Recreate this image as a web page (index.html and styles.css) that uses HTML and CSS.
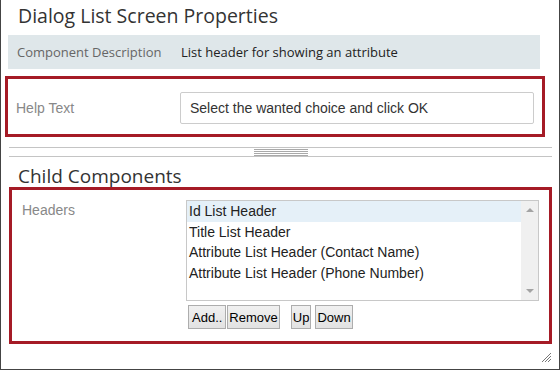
FILE: index.html
```html
<!DOCTYPE html>
<html>
<head>
    <title>Dialog List Screen Properties</title>
    <link rel="stylesheet" href="styles.css">
</head>
<body>
    <div class="dialog">
        <h1 class="title">Dialog List Screen Properties</h1>

        <div class="desc">
            <span class="desc-label">Component Description</span>
            <span class="desc-value">List header for showing an attribute</span>
        </div>

        <div class="box help-box">
            <span class="field-label">Help Text</span>
            <div class="text-input">Select the wanted choice and click OK</div>
        </div>

        <div class="splitter"><div class="grip"></div></div>

        <h2 class="title sub">Child Components</h2>

        <div class="box child-box">
            <span class="field-label">Headers</span>
            <div class="list-col">
                <div class="listbox">
                    <ul class="items">
                        <li class="selected">Id List Header</li>
                        <li>Title List Header</li>
                        <li>Attribute List Header (Contact Name)</li>
                        <li>Attribute List Header (Phone Number)</li>
                    </ul>
                    <div class="scrollbar">
                        <span class="arrow up"></span>
                        <span class="arrow down"></span>
                    </div>
                </div>
                <div class="buttons">
                    <button class="add">Add..</button>
                    <button class="remove">Remove</button>
                    <button class="up">Up</button>
                    <button class="down">Down</button>
                </div>
            </div>
        </div>

        <div class="footer">
            <svg class="resize" width="11" height="11" viewBox="0 0 11 11">
                <path d="M10 1 L1 10 M10 4 L4 10 M10 7 L7 10" stroke="#777" stroke-width="1"/>
            </svg>
        </div>
    </div>
</body>
</html>
```

FILE: styles.css
```css
body { margin: 0; background: #fff; font-family: "Liberation Sans", Arial, sans-serif; }
.dialog { box-sizing: border-box; width: 560px; height: 370px; border: 1px solid #444; border-top: none; display: flex; flex-direction: column; }

.title { margin: 0; padding-left: 17px; font-family: "Open Sans", sans-serif; font-weight: 400; font-size: 19.5px; color: #333; height: 35px; line-height: 31px; }
.sub { height: 30px; line-height: 38px; font-size: 19px; }

.desc { display: flex; align-items: center; margin: 0 19px 0 7px; height: 34px; background: #dfe7ea; padding-left: 9px; font-family: "Open Sans", sans-serif; font-size: 13px; }
.desc-label { width: 164px; color: #666; }
.desc-value { color: #222; }

.box { border: 3px solid #a51b26; display: flex; }
.field-label { color: #888; font-size: 14px; }

.help-box { margin: 7px 14px 0 4px; height: 55px; align-items: center; padding: 0 8px; }
.help-box .field-label { width: 164px; padding-top: 3px; }
.text-input { flex: 1; box-sizing: border-box; height: 32px; margin-top: 3px; border: 1px solid #ccc; border-radius: 2px; padding: 0 9px; line-height: 30px; font-size: 14px; color: #333; }

.splitter { margin: 10px 7px 0 8px; height: 8px; border-top: 1px solid #c4c4c4; border-bottom: 1px solid #c4c4c4; display: flex; justify-content: center; }
.grip { width: 54px; height: 7px; margin-top: 1px; background: repeating-linear-gradient(#a9a9a9 0 1px, transparent 1px 2px); }

.child-box { margin: 0 7px 0 8px; padding: 10px 10px 0 10px; height: 141px; }
.child-box .field-label { width: 164px; padding-top: 2px; }
.list-col { flex: 1; }
.listbox { box-sizing: border-box; height: 101px; border: 1px solid #c8c8c8; display: flex; }
.items { flex: 1; margin: 0; padding: 0; list-style: none; font-size: 14px; color: #222; }
.items li { height: 20.5px; line-height: 20px; padding-left: 2px; }
.items li.selected { background: #e5f0f8; }
.scrollbar { width: 17px; background: #f0f0f0; display: flex; flex-direction: column; justify-content: space-between; align-items: center; padding: 7px 0; }
.arrow { width: 0; height: 0; border-left: 4px solid transparent; border-right: 4px solid transparent; }
.arrow.up { border-bottom: 4px solid #a3a3a3; }
.arrow.down { border-top: 4px solid #a3a3a3; }

.buttons { display: flex; margin: 4px 0 0 2px; }
button { font-family: "Liberation Sans", Arial, sans-serif; font-size: 13px; color: #000; height: 24px; padding: 0 1px; border: 1px solid #adadad; background: linear-gradient(#f0f0f0, #e2e2e2); border-radius: 0; }
button.add { padding: 0 3px; }
button.remove { margin-left: 1px; }
button.up { margin-left: 11px; }
button.down { margin-left: 4px; }

.footer { flex: 1; display: flex; justify-content: flex-end; align-items: flex-end; padding: 0 7px 6px 0; }
```
